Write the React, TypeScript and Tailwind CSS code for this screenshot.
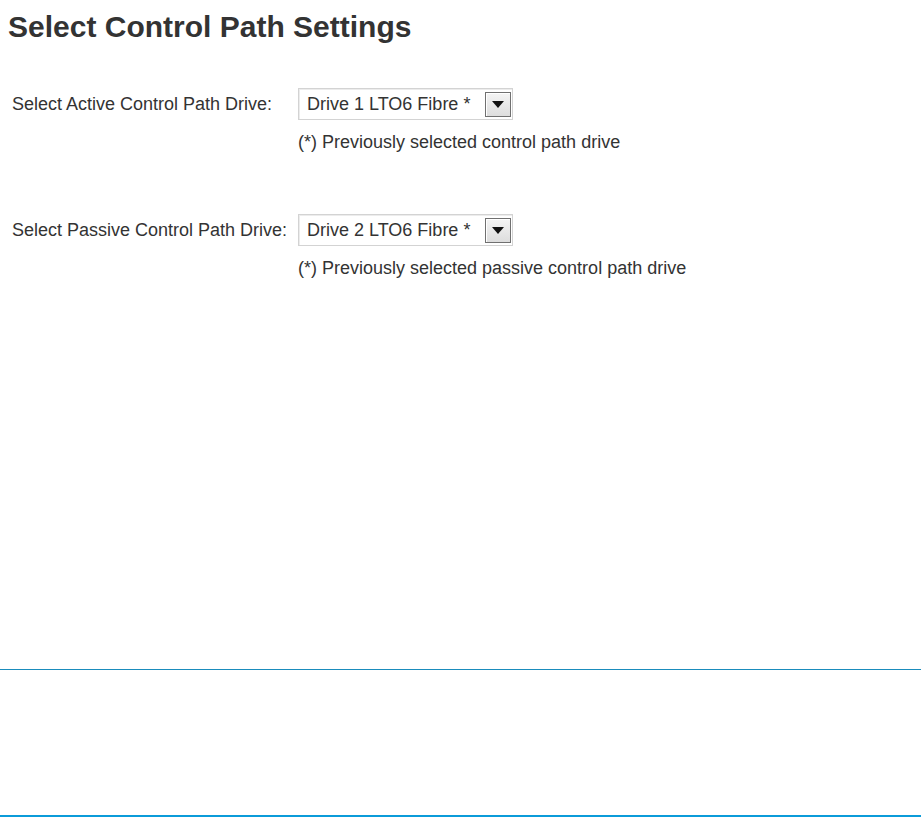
import React from "react";

const font = { fontFamily: '"Liberation Sans", Arial, sans-serif' };

function DriveSelect({ value }: { value: string }) {
  return (
    <div className="flex h-[32px] w-[215px] items-center border border-[#d3d3d3] bg-white pl-[8px] pr-[1px] shadow-[inset_1px_1px_0_#ececec]">
      <span className="flex-1 whitespace-nowrap text-[18px] leading-none text-[#333]">
        {value}
      </span>
      <div className="flex h-[25px] w-[26px] items-center justify-center border border-[#707070] bg-gradient-to-b from-[#f4f4f4] to-[#dddddd] shadow-[inset_1px_1px_0_#ffffff]">
        <svg width="12" height="7" viewBox="0 0 12 7">
          <path d="M0 0h12L6 7z" fill="#111" />
        </svg>
      </div>
    </div>
  );
}

function Row({
  label,
  value,
  note,
}: {
  label: string;
  value: string;
  note: string;
}) {
  return (
    <div className="flex items-start">
      <div className="flex h-[32px] w-[298px] shrink-0 items-center whitespace-nowrap pl-[12px] text-[18px] text-[#333]">
        {label}
      </div>
      <div className="flex flex-col">
        <DriveSelect value={value} />
        <p className="mt-[12px] text-[18px] leading-[20px] text-[#333]">
          {note}
        </p>
      </div>
    </div>
  );
}

export default function App() {
  return (
    <div className="flex h-[817px] w-full flex-col bg-white" style={font}>
      <div className="flex-1">
        <h1 className="ml-[8px] mt-[9px] text-[30px] font-bold leading-[36px] text-[#333]">
          Select Control Path Settings
        </h1>
        <div className="mt-[43px] flex flex-col gap-[62px]">
          <Row
            label="Select Active Control Path Drive:"
            value="Drive 1 LTO6 Fibre *"
            note="(*) Previously selected control path drive"
          />
          <Row
            label="Select Passive Control Path Drive:"
            value="Drive 2 LTO6 Fibre *"
            note="(*) Previously selected passive control path drive"
          />
        </div>
      </div>
      <div className="h-[1px] bg-[#1a8cbc]" />
      <div className="h-[145px]" />
      <div className="h-[2px] bg-[#0b9bd9]" />
    </div>
  );
}
